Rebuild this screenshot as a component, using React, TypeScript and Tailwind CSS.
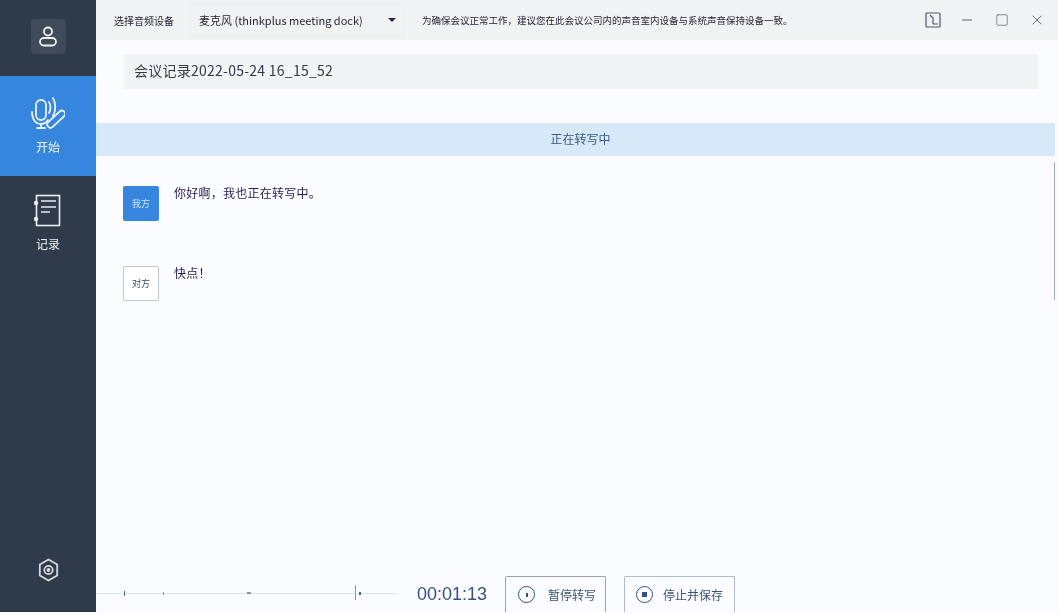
import { Minus, Square, X } from "lucide-react";

const font = { fontFamily: '"Noto Sans CJK SC", "Liberation Sans", sans-serif' };

const MicPenIcon = () => (
  <svg width="34" height="32" viewBox="0 0 34 32" fill="none" stroke="#e8f1fb" strokeWidth="1.8" strokeLinecap="round" strokeLinejoin="round">
    <rect x="5" y="3" width="10" height="20" rx="5" />
    <path d="M1 15c0 8 4 12 9 12 3 0 5-1 7-4" />
    <path d="M10 27v3M6 31h8" />
    <path d="M18 5c2 3 2 8 0 11M22 1c3 5 3 13 0 18" />
    <rect x="14" y="19" width="22" height="6.5" rx="3.2" transform="rotate(-43 25 22)" />
  </svg>
);

const RecordIcon = () => (
  <svg width="28" height="33" viewBox="0 0 28 33" fill="none" stroke="#e9edf1" strokeWidth="1.6">
    <rect x="2.5" y="1.5" width="23" height="30" />
    <path d="M7 7h15M7 13h15M7 18h9" />
    <circle cx="2" cy="9" r="1.5" fill="#e9edf1" />
    <circle cx="2" cy="25" r="1.5" fill="#e9edf1" />
  </svg>
);

const Sidebar = () => (
  <aside className="flex h-[612px] w-[96px] shrink-0 flex-col bg-[#2f3b4b] text-[12px] text-[#f0f4f8]">
    <div className="flex h-[76px] items-start justify-center pt-[19px]">
      <div className="flex h-[35px] w-[35px] items-center justify-center rounded-sm bg-[#3f4b5a]">
        <svg width="18" height="21" viewBox="0 0 18 21" fill="none" stroke="#eef1f4" strokeWidth="1.8">
          <circle cx="9" cy="5.5" r="4" />
          <rect x="1" y="12" width="16" height="7.5" rx="3.7" />
        </svg>
      </div>
    </div>
    <div className="flex h-[100px] flex-col items-center bg-[#3586dc] pt-[21px]">
      <MicPenIcon />
      <span className="mt-[10px] leading-4">开始</span>
    </div>
    <div className="flex flex-col items-center pt-[18px]">
      <RecordIcon />
      <span className="mt-[9px] leading-4">记录</span>
    </div>
    <div className="mt-auto flex justify-center pb-[30px]">
      <svg width="21" height="24" viewBox="0 0 21 24" fill="none" stroke="#d5dae0" strokeWidth="1.8">
        <path d="M10.5 1.5l8.7 5v11l-8.7 5-8.7-5v-11z" strokeLinejoin="round" />
        <circle cx="10.5" cy="12" r="4.2" />
        <circle cx="10.5" cy="12" r="1" fill="#d5dae0" />
      </svg>
    </div>
  </aside>
);

const TopBar = () => (
  <header className="flex h-[40px] shrink-0 items-center bg-[#f0f3f3] text-[10px] text-[#252535]">
    <span className="ml-[18px] w-[76px] whitespace-nowrap">选择音频设备</span>
    <div className="flex h-[33px] w-[214px] items-center justify-between border border-[#eaeeee] pl-[8px] pr-[7px] text-[11px]">
      <span className="whitespace-nowrap">麦克风 (thinkplus meeting dock)</span>
      <span className="h-0 w-0 border-x-[4px] border-t-[4px] border-x-transparent border-t-[#2a2a3a]" />
    </div>
    <span className="ml-[18px] whitespace-nowrap text-[9.5px]">为确保会议正常工作，建议您在此会议公司内的声音室内设备与系统声音保持设备一致。</span>
    <div className="ml-auto flex items-center text-[#4c5560]">
      <svg width="16" height="16" viewBox="0 0 16 16" fill="none" stroke="#4c5868" strokeWidth="1.2">
        <rect x="1" y="1" width="14" height="14" rx="1" />
        <path d="M5 3l3 3v6M8 12h5" />
      </svg>
      <Minus size={16} strokeWidth={1.4} className="ml-[18px]" />
      <Square size={14} strokeWidth={1.1} className="ml-[20px]" />
      <X size={16} strokeWidth={1.3} className="ml-[20px] mr-[13px]" />
    </div>
  </header>
);

const Message = ({ who, text, mine }: { who: string; text: string; mine?: boolean }) => (
  <div className="flex h-[80px] items-start gap-[15px]">
    <div
      className={
        mine
          ? "flex h-[35px] w-[36px] items-center justify-center rounded-[2px] bg-[#3586dc] text-[9px] text-[#cfe2f7]"
          : "flex h-[35px] w-[36px] items-center justify-center rounded-[2px] border border-[#c3c8cf] bg-white text-[9px] text-[#3c4a63]"
      }
    >
      {who}
    </div>
    <span className="-mt-[1px] text-[12px] leading-4 tracking-[0.25px] text-[#2a1b4d]">{text}</span>
  </div>
);

const BottomBar = () => (
  <footer className="flex h-[58px] shrink-0 items-start">
    <div className="relative mt-[37px] h-px w-[301px] bg-[#dfe4ea]">
      <span className="absolute left-[28px] -top-[2px] h-[5px] w-px bg-[#55607a]" />
      <span className="absolute left-[67px] -top-px h-[3px] w-px bg-[#8a93a3]" />
      <span className="absolute left-[151px] -top-px h-[2px] w-[4px] bg-[#8a93a3]" />
      <span className="absolute left-[259px] -top-[8px] h-[15px] w-px bg-[#8a93a3]" />
      <span className="absolute left-[263px] -top-px h-[3px] w-[2px] bg-[#55607a]" />
    </div>
    <span className="ml-[20px] mt-[28px] text-[18px] leading-5 text-[#3c4f86]" style={{ fontFamily: '"Liberation Sans", sans-serif' }}>
      00:01:13
    </span>
    <button className="ml-[18px] mt-[20px] flex h-[36px] w-[101px] items-center rounded-t-[2px] border border-b-0 border-[#9aa5b2] pl-[12px] text-[12px] text-[#3e5270]">
      <span className="mr-[13px] flex h-[17px] w-[17px] items-center justify-center rounded-full border-[1.5px] border-[#34527e]">
        <span className="h-[4px] w-[2px] bg-[#34527e]" />
      </span>
      暂停转写
    </button>
    <button className="ml-[18px] mt-[20px] flex h-[36px] w-[111px] items-center rounded-t-[2px] border border-b-0 border-[#b2bac4] pl-[11px] text-[12px] text-[#3e5270]">
      <span className="mr-[10px] flex h-[17px] w-[17px] items-center justify-center rounded-full border-[1.5px] border-[#34527e]">
        <span className="h-[5px] w-[5px] bg-[#34527e]" />
      </span>
      停止并保存
    </button>
  </footer>
);

export default function App() {
  return (
    <div className="flex h-[614px] w-[1058px] overflow-hidden bg-[#fbfcff] blur-[0.5px]" style={font}>
      <Sidebar />
      <main className="relative flex min-w-0 flex-1 flex-col">
        <TopBar />
        <div className="mx-[28px] mt-[14px] mr-[20px] flex h-[35px] shrink-0 items-center bg-[#f1f4f4] pb-[2px] pl-[10px] text-[14px] tracking-[0.25px] text-[#333a45]">
          会议记录2022-05-24 16_15_52
        </div>
        <div className="mt-[34px] mr-[3px] flex h-[33px] shrink-0 items-center justify-center bg-[#d7e8f8] pb-[1px] pl-[10px] text-[12px] text-[#3f5878]">
          正在转写中
        </div>
        <div className="flex-1 pl-[27px] pt-[30px]">
          <Message who="我方" text="你好啊，我也正在转写中。" mine />
          <Message who="对方" text="快点！" />
        </div>
        <BottomBar />
        <span className="absolute right-[3px] top-[162px] h-[138px] w-px bg-[#a3acbb]" />
      </main>
    </div>
  );
}
